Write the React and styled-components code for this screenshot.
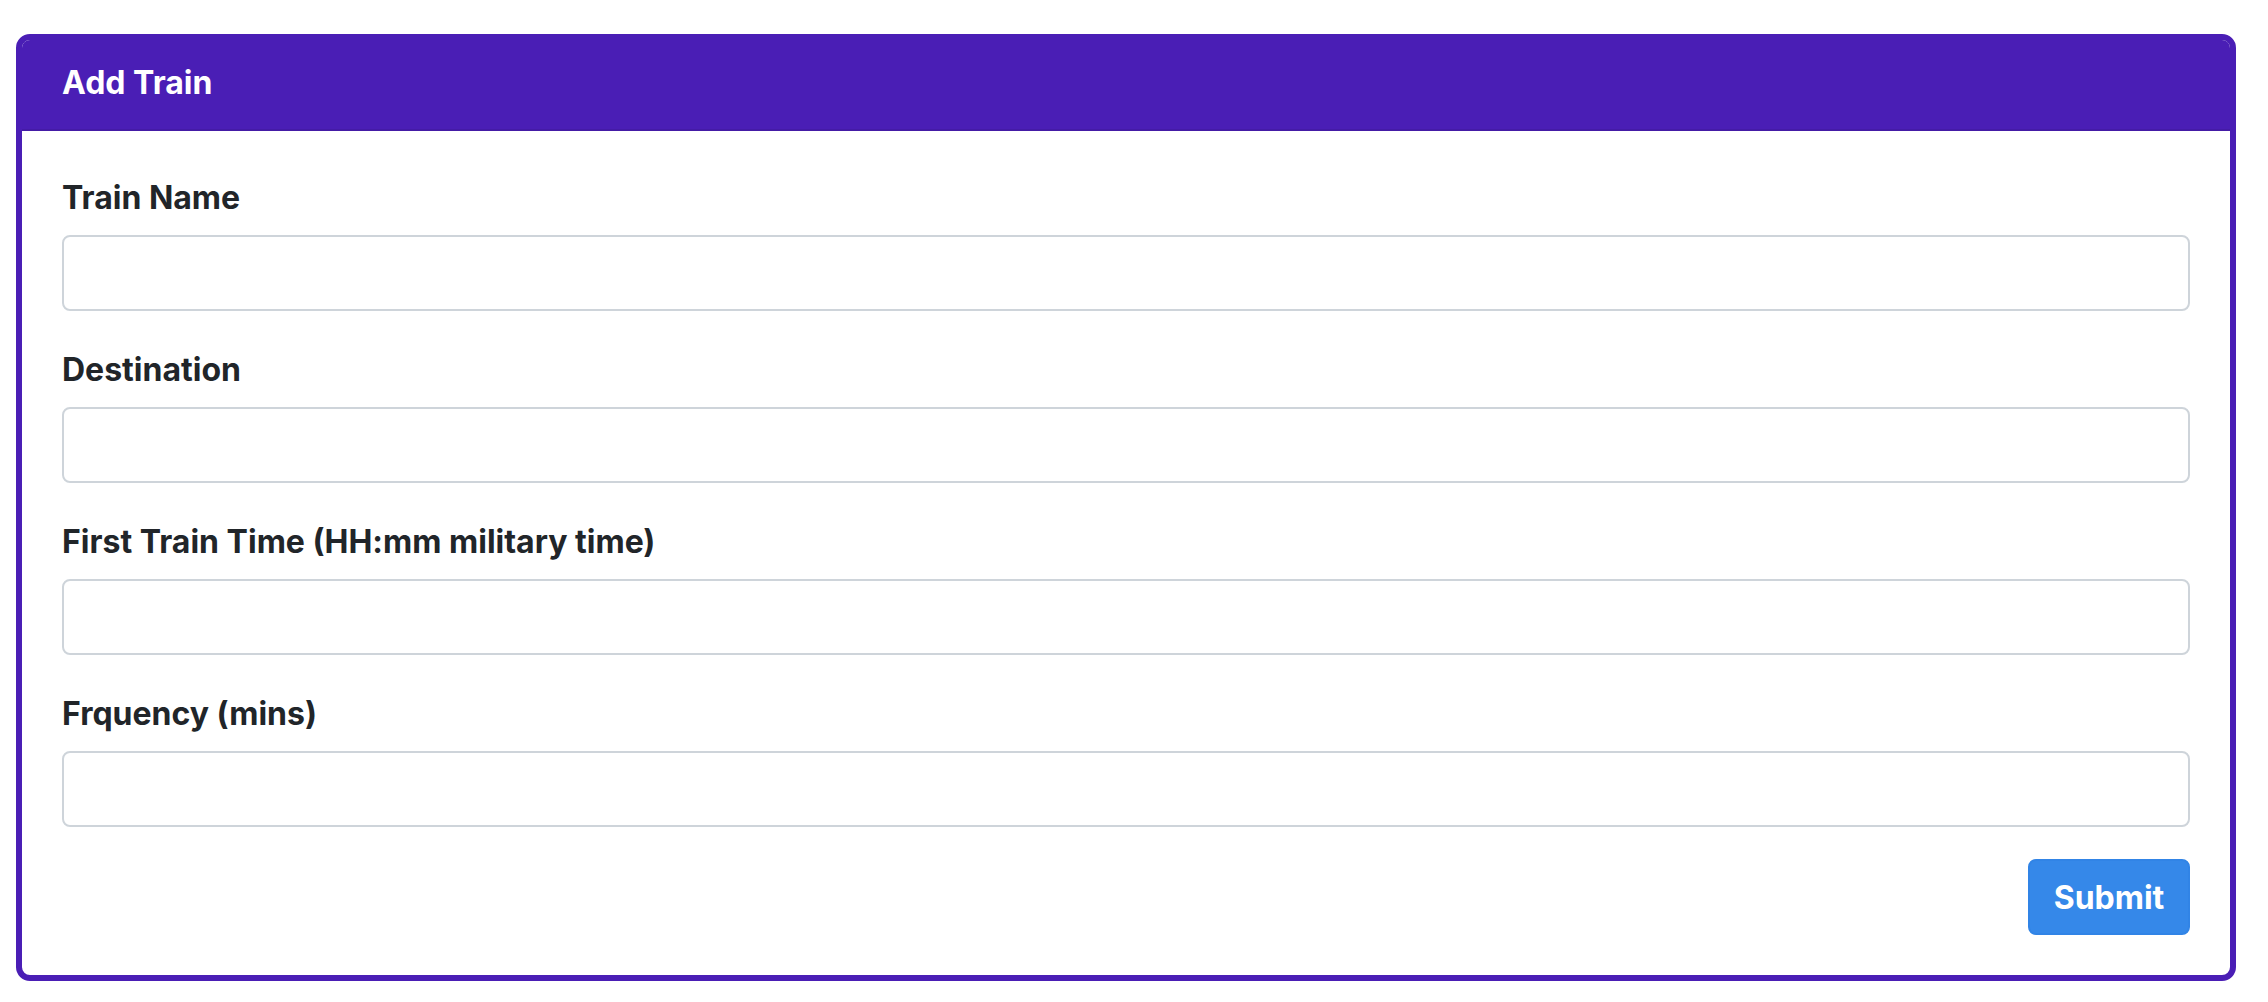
import React from 'react'
import styled, { createGlobalStyle } from 'styled-components'

const GlobalStyle = createGlobalStyle`
  body {
    margin: 0;
    background: #fff;
    font-family: Inter, "Noto Sans", "Liberation Sans", sans-serif;
    color: #212529;
  }
`

const Page = styled.div`
  padding: 34px 32px 20px 16px;
`

const Card = styled.div`
  border: 6px solid #4a1eb5;
  border-radius: 14px;
  background: #fff;
  overflow: hidden;
`

const CardHeader = styled.div`
  background: #4a1eb5;
  color: #fff;
  margin-top: -6px;
  padding: 25px 40px 22px 40px;
  border-bottom: 2px solid #441ba6;
  font-size: 32px;
  font-weight: 700;
  line-height: 48px;
`

const CardBody = styled.form`
  padding: 40px;
  display: flex;
  flex-direction: column;
`

const FormGroup = styled.div`
  display: flex;
  flex-direction: column;
  margin-bottom: 32px;
`

const Label = styled.label`
  font-size: 32px;
  font-weight: 700;
  line-height: 48px;
  padding-top: 3px;
  margin-bottom: 13px;
`

const Input = styled.input`
  height: 76px;
  box-sizing: border-box;
  border: 2px solid #ced4da;
  border-radius: 8px;
  padding: 12px 24px;
  font-size: 32px;
  font-family: inherit;
  outline: none;
`

const Actions = styled.div`
  display: flex;
  justify-content: flex-end;
`

const SubmitButton = styled.button`
  height: 76px;
  width: 162px;
  box-sizing: border-box;
  background: #3588e9;
  border: 2px solid #3184e6;
  border-radius: 8px;
  color: #fff;
  font-family: inherit;
  font-size: 32px;
  font-weight: 700;
  cursor: pointer;
`

const fields = [
  'Train Name',
  'Destination',
  'First Train Time (HH:mm military time)',
  'Frquency (mins)',
]

function App() {
  return (
    <Page>
      <GlobalStyle />
      <Card>
        <CardHeader>Add Train</CardHeader>
        <CardBody onSubmit={e => e.preventDefault()}>
          {fields.map(f => (
            <FormGroup key={f}>
              <Label>{f}</Label>
              <Input type="text" />
            </FormGroup>
          ))}
          <Actions>
            <SubmitButton type="submit">Submit</SubmitButton>
          </Actions>
        </CardBody>
      </Card>
    </Page>
  )
}

export default App
